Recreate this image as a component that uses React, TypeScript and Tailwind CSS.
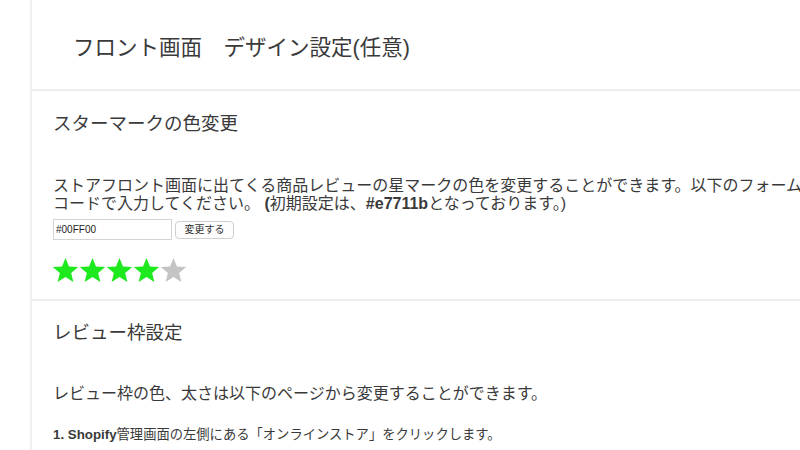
import React from "react";

const Star = ({ color }: { color: string }) => (
  <svg width="27" height="26" viewBox="0 0 24 23">
    <path
      d="M12 0.8l3.1 7.6 8.2 0.5-6.3 5.3 2 8-7-4.4-7 4.4 2-8L0.7 8.9l8.2-0.5z"
      fill={color}
    />
  </svg>
);

export default function App() {
  const font = {
    fontFamily: '"Liberation Sans", "Noto Sans CJK JP", sans-serif',
  };
  return (
    <div
      className="w-[800px] h-[450px] overflow-hidden bg-white flex text-[#3a3a3a]"
      style={font}
    >
      <div className="w-[30px] shrink-0" />
      <div className="flex-1 border-l-2 border-[#f0f0f0] min-w-0">
        <div className="h-[91px] flex items-center pl-[41px] pt-[6px] border-b-2 border-[#ededed]">
          <h1 className="text-[21.5px] leading-[26px] whitespace-nowrap">
            フロント画面　デザイン設定(任意)
          </h1>
        </div>
        <div className="pl-[21px] pt-[22px] border-b-2 border-[#ededed] h-[210px]">
          <h2 className="text-[18.5px] leading-[22px] whitespace-nowrap">
            スターマークの色変更
          </h2>
          <div className="mt-[42px] text-[16px] leading-[18px] whitespace-nowrap">
            <div>
              ストアフロント画面に出てくる商品レビューの星マークの色を変更することができます。以下のフォームにカラー
            </div>
            <div>
              コードで入力してください。 <b>(</b>初期設定は、<b>#e7711b</b>となっております。)
            </div>
          </div>
          <div className="flex items-center gap-[3px] mt-[6px]">
            <div className="w-[119px] h-[21px] border border-[#d4d4d4] text-[10px] leading-[19px] pl-[2px] text-[#222]">
              #00FF00
            </div>
            <div className="w-[59px] h-[18px] border border-[#cfcfcf] rounded-[4px] text-[10px] leading-[16px] text-center text-[#333] bg-[#fdfdfd]">
              変更する
            </div>
          </div>
          <div className="flex mt-[17px] -ml-[1px]">
            <Star color="#1ee81e" />
            <Star color="#1ee81e" />
            <Star color="#1ee81e" />
            <Star color="#1ee81e" />
            <Star color="#c4c4c4" />
          </div>
        </div>
        <div className="pl-[21px] pt-[21px]">
          <h2 className="text-[18.5px] leading-[22px] whitespace-nowrap">
            レビュー枠設定
          </h2>
          <div className="mt-[41px] text-[16px] leading-[18px] whitespace-nowrap">
            レビュー枠の色、太さは以下のページから変更することができます。
          </div>
          <div className="mt-[23px] text-[13.3px] leading-[17px] whitespace-nowrap">
            <b>1. Shopify</b>管理画面の左側にある「オンラインストア」をクリックします。
          </div>
        </div>
      </div>
    </div>
  );
}
